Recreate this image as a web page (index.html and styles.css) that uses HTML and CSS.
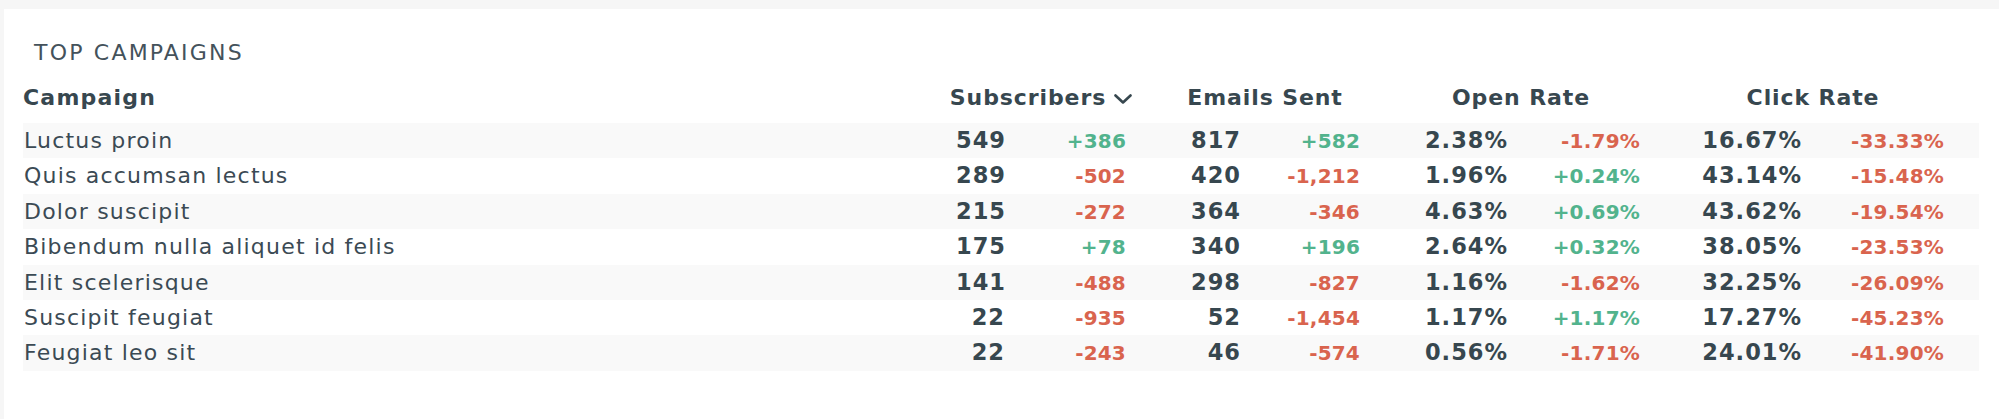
FILE: index.html
```html
<!DOCTYPE html>
<html lang="en">
<head>
<meta charset="utf-8">
<title>Top Campaigns</title>
<link rel="stylesheet" href="styles.css">
</head>
<body>
<section class="card">
  <h2 class="title">TOP CAMPAIGNS</h2>
  <div class="table">
    <div class="row head">
      <div class="th name-col">Campaign</div>
      <div class="th group first">Subscribers<svg class="chev" width="18" height="10" viewBox="0 0 18 10"><path d="M1.5 1.5 L9 8.5 L16.5 1.5" fill="none" stroke="#37474f" stroke-width="2.6" stroke-linecap="round" stroke-linejoin="round"/></svg></div>
      <div class="th group wide">Emails Sent</div>
      <div class="th group">Open Rate</div>
      <div class="th group">Click Rate</div>
    </div>

    <div class="row">
      <div class="name">Luctus proin</div>
      <div class="val">549</div><div class="delta up">+386</div>
      <div class="val">817</div><div class="delta up">+582</div>
      <div class="val">2.38%</div><div class="delta down">-1.79%</div>
      <div class="val">16.67%</div><div class="delta down">-33.33%</div>
    </div>
    <div class="row">
      <div class="name">Quis accumsan lectus</div>
      <div class="val">289</div><div class="delta down">-502</div>
      <div class="val">420</div><div class="delta down">-1,212</div>
      <div class="val">1.96%</div><div class="delta up">+0.24%</div>
      <div class="val">43.14%</div><div class="delta down">-15.48%</div>
    </div>
    <div class="row">
      <div class="name">Dolor suscipit</div>
      <div class="val">215</div><div class="delta down">-272</div>
      <div class="val">364</div><div class="delta down">-346</div>
      <div class="val">4.63%</div><div class="delta up">+0.69%</div>
      <div class="val">43.62%</div><div class="delta down">-19.54%</div>
    </div>
    <div class="row">
      <div class="name">Bibendum nulla aliquet id felis</div>
      <div class="val">175</div><div class="delta up">+78</div>
      <div class="val">340</div><div class="delta up">+196</div>
      <div class="val">2.64%</div><div class="delta up">+0.32%</div>
      <div class="val">38.05%</div><div class="delta down">-23.53%</div>
    </div>
    <div class="row">
      <div class="name">Elit scelerisque</div>
      <div class="val">141</div><div class="delta down">-488</div>
      <div class="val">298</div><div class="delta down">-827</div>
      <div class="val">1.16%</div><div class="delta down">-1.62%</div>
      <div class="val">32.25%</div><div class="delta down">-26.09%</div>
    </div>
    <div class="row">
      <div class="name">Suscipit feugiat</div>
      <div class="val">22</div><div class="delta down">-935</div>
      <div class="val">52</div><div class="delta down">-1,454</div>
      <div class="val">1.17%</div><div class="delta up">+1.17%</div>
      <div class="val">17.27%</div><div class="delta down">-45.23%</div>
    </div>
    <div class="row">
      <div class="name">Feugiat leo sit</div>
      <div class="val">22</div><div class="delta down">-243</div>
      <div class="val">46</div><div class="delta down">-574</div>
      <div class="val">0.56%</div><div class="delta down">-1.71%</div>
      <div class="val">24.01%</div><div class="delta down">-41.90%</div>
    </div>
  </div>
</section>
</body>
</html>
```
FILE: styles.css
```css
html, body {
  margin: 0;
  padding: 0;
  background: #f6f6f6;
  overflow: hidden;
}

body {
  font-family: "DejaVu Sans", "Noto Sans", sans-serif;
  color: #37474f;
}

.card {
  background: #ffffff;
  margin: 9px 0 0 4px;
  padding: 32px 20px 0 19px;
  min-height: 430px;
  box-sizing: border-box;
}

.title {
  margin: 0 0 0 11px;
  font-size: 22px;
  line-height: 22px;
  font-weight: 400;
  letter-spacing: 2.2px;
  color: #44525b;
  padding-top: 0.5px;
}

.table {
  margin-top: 23px;
}

.row {
  display: grid;
  grid-template-columns: 1fr 49px 121px 115px 119px 148px 132px 162px 142px;
  grid-template-rows: 35.4px;
  height: 35.4px;
  padding-right: 35px;
  align-items: baseline;
}

.row:not(.head):nth-child(even) {
  background: #f9f9f9;
}

.row.head {
  grid-template-rows: 22px;
  height: 22px;
  margin-bottom: 14.6px;
  align-items: start;
}

.th {
  font-weight: 700;
  font-size: 22px;
  line-height: 22px;
  letter-spacing: 0.9px;
  color: #37474f;
}

.th.name-col {
  letter-spacing: 1.2px;
}

.th.group {
  grid-column: span 2;
  text-align: center;
  padding-left: 42px;
  display: flex;
  justify-content: center;
  align-items: center;
}

.th.group.first {
  padding-left: 0;
}

.th.group.wide {
  padding-left: 44px;
}

.chev {
  margin-left: 8px;
  margin-top: 2px;
  flex: none;
}

.name,
.val,
.delta {
  line-height: 35.4px;
  white-space: nowrap;
}

.name {
  font-size: 22px;
  letter-spacing: 1.2px;
  color: #3b4a54;
  padding-left: 1px;
}

.val {
  font-size: 22.5px;
  font-weight: 700;
  letter-spacing: 1px;
  text-align: right;
  color: #37474f;
}

.delta {
  font-size: 20px;
  font-weight: 700;
  letter-spacing: 0.2px;
  text-align: right;
}

.delta.up {
  color: #52b38d;
}

.delta.down {
  color: #d9644e;
}
```
